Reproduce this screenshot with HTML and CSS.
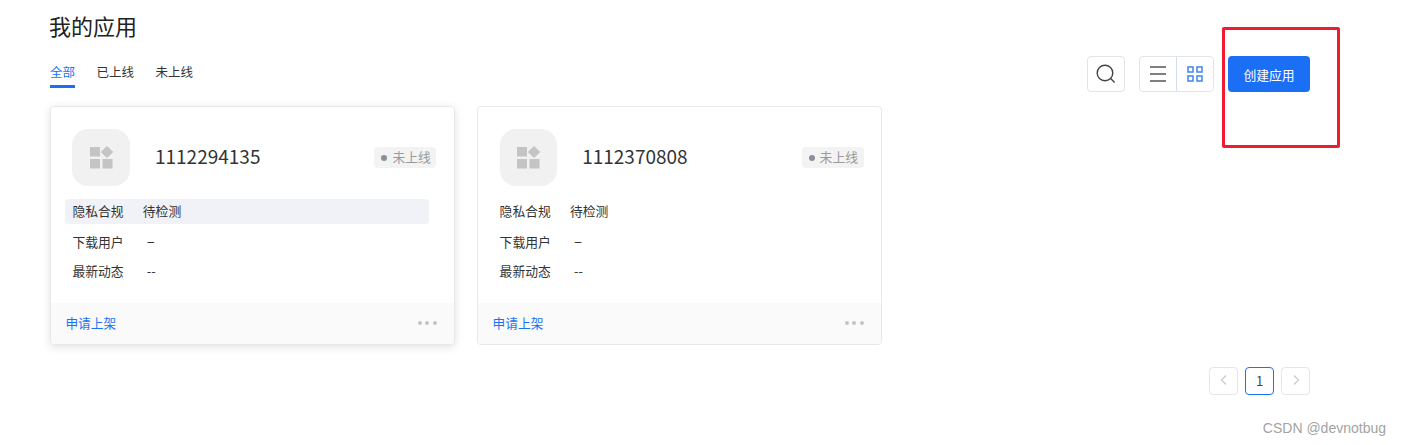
FILE: index.html
```html
<!DOCTYPE html>
<html lang="zh-CN">
<head>
    <meta charset="UTF-8">
    <title>我的应用</title>
    <link rel="stylesheet" href="styles.css">
</head>
<body>
    <div class="container">
        <h1>我的应用</h1>

        <div class="toolbar">
            <div class="tabs">
                <a class="tab active">全部</a>
                <a class="tab">已上线</a>
                <a class="tab">未上线</a>
            </div>
            <div class="tools">
                <button class="icon-btn search-btn">
                    <svg width="20" height="20" viewBox="0 0 20 20" fill="none" stroke="#444" stroke-width="1.4"><circle cx="9" cy="9" r="7.8"/><path d="M14.6 14.6 18.6 18.6"/></svg>
                </button>
                <div class="view-switch">
                    <button class="icon-btn">
                        <svg width="16" height="16" viewBox="0 0 16 16" stroke="#555" stroke-width="1.4"><path d="M0 1h16M0 8h16M0 15h16"/></svg>
                    </button>
                    <button class="icon-btn">
                        <svg width="16" height="16" viewBox="0 0 16 16" fill="none" stroke="#4a8cf0" stroke-width="1.6"><rect x="1" y="1" width="5" height="5"/><rect x="10" y="1" width="5" height="5"/><rect x="1" y="10" width="5" height="5"/><rect x="10" y="10" width="5" height="5"/></svg>
                    </button>
                </div>
                <button class="create-btn">创建应用</button>
            </div>
        </div>

        <div class="cards">
            <div class="card card-hover">
                <div class="card-head">
                    <div class="app-icon">
                        <svg width="24" height="23" viewBox="0 0 24 23" fill="#c4c4c4"><rect x="0" y="1" width="10" height="9.5"/><path d="M17 0 23.3 6 17 12 10.8 6Z"/><rect x="0" y="13" width="10" height="9.5"/><rect x="12.5" y="13" width="10" height="9.5"/></svg>
                    </div>
                    <div class="app-name">1112294135</div>
                    <div class="badge"><span class="dot"></span>未上线</div>
                </div>
                <div class="rows">
                    <div class="row row-light"><span class="row-label">隐私合规</span><span class="row-value">待检测</span></div>
                    <div class="row"><span class="row-label">下载用户</span><span class="row-value dash">–</span></div>
                    <div class="row"><span class="row-label">最新动态</span><span class="row-value num">--</span></div>
                </div>
                <div class="card-foot">
                    <a class="link">申请上架</a>
                    <span class="more"><i></i><i></i><i></i></span>
                </div>
            </div>

            <div class="card">
                <div class="card-head">
                    <div class="app-icon">
                        <svg width="24" height="23" viewBox="0 0 24 23" fill="#c4c4c4"><rect x="0" y="1" width="10" height="9.5"/><path d="M17 0 23.3 6 17 12 10.8 6Z"/><rect x="0" y="13" width="10" height="9.5"/><rect x="12.5" y="13" width="10" height="9.5"/></svg>
                    </div>
                    <div class="app-name">1112370808</div>
                    <div class="badge"><span class="dot"></span>未上线</div>
                </div>
                <div class="rows">
                    <div class="row"><span class="row-label">隐私合规</span><span class="row-value">待检测</span></div>
                    <div class="row"><span class="row-label">下载用户</span><span class="row-value dash">–</span></div>
                    <div class="row"><span class="row-label">最新动态</span><span class="row-value num">--</span></div>
                </div>
                <div class="card-foot">
                    <a class="link">申请上架</a>
                    <span class="more"><i></i><i></i><i></i></span>
                </div>
            </div>
        </div>

        <div class="pager">
            <button class="page-btn">
                <svg width="8" height="10" viewBox="0 0 8 10" fill="none" stroke="#c8c8c8" stroke-width="1.1"><path d="M6 .5 1.5 5 6 9.5"/></svg>
            </button>
            <button class="page-btn current">1</button>
            <button class="page-btn">
                <svg width="8" height="10" viewBox="0 0 8 10" fill="none" stroke="#c8c8c8" stroke-width="1.1"><path d="M2 .5 6.5 5 2 9.5"/></svg>
            </button>
        </div>
    </div>

    <div class="mark-box"></div>
    <div class="watermark">CSDN @devnotbug</div>
</body>
</html>
```

FILE: styles.css
```css
body {
    font-family: "Noto Sans CJK SC", "Noto Sans", sans-serif;
    background: white;
    color: #333;
    margin: 0;
    height: 445px;
    overflow: hidden;
    position: relative;
}

.container {
    width: 1260px;
    padding: 10px 0 0 50px;
}

h1 {
    margin: 0 0 16px -1px;
    font-size: 22px;
    font-weight: 400;
    line-height: 30px;
    color: #222;
}

.toolbar {
    display: flex;
    justify-content: space-between;
    height: 36px;
    margin-bottom: 14px;
}

.tabs {
    display: flex;
    gap: 21.5px;
    height: 32px;
}

.tab {
    font-size: 12.5px;
    line-height: 32px;
    color: #333;
    box-sizing: border-box;
}

.tab.active {
    color: #1a73f5;
    border-bottom: 3px solid #1a6ff5;
}

.tools {
    display: flex;
}

button {
    font-family: inherit;
    background: white;
    padding: 0;
    cursor: pointer;
}

.icon-btn {
    display: flex;
    align-items: center;
    justify-content: center;
    border: none;
}

.search-btn {
    width: 38px;
    height: 36px;
    border: 1px solid #e1e4e8;
    border-radius: 4px;
    margin-right: 14px;
}

.view-switch {
    display: flex;
    width: 75px;
    height: 36px;
    box-sizing: border-box;
    border: 1px solid #e1e4e8;
    border-radius: 4px;
    margin-right: 14px;
}

.view-switch .icon-btn {
    flex: 1;
    border-radius: 4px;
}

.view-switch .icon-btn + .icon-btn {
    border-left: 1px solid #d5dde8;
    border-radius: 0 4px 4px 0;
}

.create-btn {
    width: 82px;
    height: 36px;
    border: none;
    border-radius: 4px;
    background: #1a6ff5;
    color: white;
    font-size: 12.8px;
}

.cards {
    display: flex;
    gap: 22px;
}

.card {
    width: 405.2px;
    height: 239px;
    box-sizing: border-box;
    border: 1px solid #e8e8e8;
    border-radius: 4px;
    display: flex;
    flex-direction: column;
    overflow: hidden;
}

.card-hover {
    box-shadow: 0 2px 8px rgba(0,0,0,0.12);
}

.card-head {
    display: flex;
    align-items: center;
    padding: 22px 17.8px 0 21.4px;
}

.app-icon {
    width: 57.6px;
    height: 57px;
    border-radius: 16px;
    background: #f1f1f1;
    display: flex;
    align-items: center;
    justify-content: center;
    flex-shrink: 0;
}

.app-icon svg {
    margin-left: 2px;
}

.app-name {
    flex: 1;
    margin: 0 0 4px 25px;
    font-size: 19px;
    color: #333;
}

.badge {
    display: flex;
    align-items: center;
    box-sizing: border-box;
    height: 21px;
    width: 62px;
    padding: 0 0 2px 7px;
    border-radius: 4px;
    background: #f3f3f3;
    font-size: 12.8px;
    color: #999;
}

.dot {
    width: 6px;
    height: 6px;
    border-radius: 50%;
    background: #8a8f99;
    margin: 2px 5px 0 0;
}

.rows {
    margin: 13px 0 0 14.4px;
    width: 364px;
}

.row {
    display: flex;
    align-items: center;
    box-sizing: border-box;
    height: 25px;
    padding: 0 7px 2px;
    margin-bottom: 4px;
    font-size: 12.8px;
    color: #333;
}

.row:first-child {
    margin-bottom: 6px;
}

.row-light {
    background: #f0f2f7;
    border-radius: 4px;
}

.row-label {
    width: 70.4px;
}

.row-value.num {
    padding-left: 4px;
}

.row-value.dash {
    padding: 0 0 3px 4px;
    font-size: 15px;
}

.card-foot {
    margin-top: auto;
    height: 41px;
    box-sizing: border-box;
    background: #fafafa;
    display: flex;
    align-items: center;
    justify-content: space-between;
    padding: 0 17.4px 3px 14.4px;
}

.link {
    font-size: 12.7px;
    color: #1a73f5;
}

.more {
    display: flex;
    gap: 3.5px;
    margin-top: 1px;
}

.more i {
    width: 4px;
    height: 4px;
    border-radius: 50%;
    background: #c4c4c4;
}

.pager {
    display: flex;
    justify-content: flex-end;
    gap: 7px;
    margin-top: 22px;
}

.page-btn {
    width: 29px;
    height: 28px;
    border: 1px solid #e5e5e5;
    border-radius: 4px;
    font-size: 13px;
    color: #444;
    display: flex;
    align-items: center;
    justify-content: center;
    padding-bottom: 2px;
}

.page-btn.current {
    border-color: #1a73f5;
}

/* red annotation drawn over the screenshot */
.mark-box {
    position: absolute;
    left: 1222px;
    top: 27px;
    width: 112px;
    height: 115px;
    border: 3px solid #ee1c2e;
    border-radius: 2px;
}

.watermark {
    position: absolute;
    right: 15px;
    top: 420px;
    font-family: "Liberation Sans", sans-serif;
    font-size: 14px;
    color: #a3a3a3;
}
```
